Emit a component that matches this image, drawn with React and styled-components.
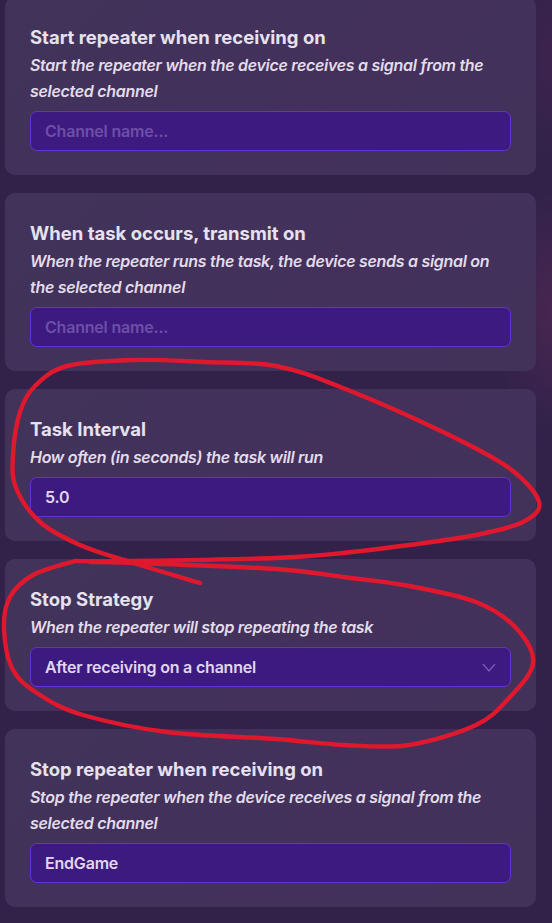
import React from 'react'
import styled, { createGlobalStyle } from 'styled-components'

const GlobalStyle = createGlobalStyle`
    html, body {
        margin: 0;
        padding: 0;
        background: #32224a;
    }
    body {
        font-family: Inter, "Noto Sans", "Liberation Sans", sans-serif;
        -webkit-font-smoothing: antialiased;
    }
`;

const fields = [
    {
        title: 'Start repeater when receiving on',
        desc: 'Start the repeater when the device receives a signal from the selected channel',
        placeholder: 'Channel name...',
    },
    {
        title: 'When task occurs, transmit on',
        desc: 'When the repeater runs the task, the device sends a signal on the selected channel',
        placeholder: 'Channel name...',
    },
    {
        title: 'Task Interval',
        desc: 'How often (in seconds) the task will run',
        value: '5.0',
    },
    {
        title: 'Stop Strategy',
        desc: 'When the repeater will stop repeating the task',
        value: 'After receiving on a channel',
        select: true,
    },
    {
        title: 'Stop repeater when receiving on',
        desc: 'Stop the repeater when the device receives a signal from the selected channel',
        value: 'EndGame',
    },
]

// hand drawn red marks over the screenshot
const loopOne = [
    [200, 583], [130, 562], [80, 545], [40, 522], [16, 488], [13, 455], [20, 412],
    [35, 386], [67, 366], [133, 360], [205, 362], [276, 366], [343, 388], [443, 432],
    [509, 468], [539, 502], [523, 522], [476, 535], [409, 545], [343, 553], [276, 558],
    [133, 561], [75, 561],
]
const loopTwo = [
    [75, 561], [33, 575], [10, 597], [4, 628], [13, 670], [40, 695], [83, 715],
    [167, 732], [276, 739], [343, 745], [409, 745], [476, 725], [509, 698], [533, 663],
    [516, 628], [476, 602], [409, 586], [343, 577], [276, 569], [133, 563], [90, 562],
]

function smooth(pts) {
    let d = `M ${pts[0][0]} ${pts[0][1]}`
    for (let i = 0; i < pts.length - 1; i++) {
        const p0 = pts[i - 1] || pts[i]
        const p1 = pts[i]
        const p2 = pts[i + 1]
        const p3 = pts[i + 2] || p2
        const c1x = p1[0] + (p2[0] - p0[0]) / 6
        const c1y = p1[1] + (p2[1] - p0[1]) / 6
        const c2x = p2[0] - (p3[0] - p1[0]) / 6
        const c2y = p2[1] - (p3[1] - p1[1]) / 6
        d += ` C ${c1x} ${c1y}, ${c2x} ${c2y}, ${p2[0]} ${p2[1]}`
    }
    return d
}

export default function App() {
    return (
        <Viewport>
            <GlobalStyle />
            <Column>
                {fields.map((f) => (
                    <Card key={f.title}>
                        <Title>{f.title}</Title>
                        <Desc>{f.desc}</Desc>
                        <Field>
                            <FieldText $muted={!f.value}>{f.value || f.placeholder}</FieldText>
                            {f.select && (
                                <svg width="14" height="9" viewBox="0 0 14 9">
                                    <polyline points="1,1 7,8 13,1" fill="none" stroke="#7b5bb6" strokeWidth="1.3" />
                                </svg>
                            )}
                        </Field>
                    </Card>
                ))}
            </Column>
            <Marks width="552" height="923" viewBox="0 0 552 923">
                <path d={smooth(loopOne)} fill="none" stroke="#e0182e" strokeWidth="4.4" strokeLinecap="round" />
                <path d={smooth(loopTwo)} fill="none" stroke="#e0182e" strokeWidth="4.4" strokeLinecap="round" />
            </Marks>
        </Viewport>
    )
}

const Viewport = styled.div`
    position: relative;
    width: 552px;
    height: 923px;
    overflow: hidden;
    background:
        radial-gradient(ellipse 70px 120px at 560px 310px, rgba(110, 45, 95, 0.4), transparent),
        radial-gradient(ellipse 60px 100px at 560px 60px, rgba(90, 40, 90, 0.3), transparent),
        #32224a;
`;

const Column = styled.div`
    display: flex;
    flex-direction: column;
    gap: 18px;
    width: 531px;
    margin-left: 5px;
    margin-top: -3px;
`;

const Card = styled.div`
    background: linear-gradient(135deg, #41335a 0%, #43315c 60%, #423259 100%);
    border-radius: 10px;
    padding: 28px 25px 24px 25px;
`;

const Title = styled.div`
    font-size: 18.5px;
    line-height: 24px;
    font-weight: 700;
    color: #e7e1ee;
`;

const Desc = styled.div`
    margin-top: 3px;
    font-size: 16px;
    line-height: 26px;
    font-style: italic;
    font-weight: 600;
    color: #e2dcea;
    letter-spacing: -0.3px;
`;

const Field = styled.div`
    margin-top: 7px;
    height: 40px;
    box-sizing: border-box;
    border: 1px solid #6431d6;
    border-radius: 7px;
    background: #3d1a80;
    display: flex;
    align-items: center;
    justify-content: space-between;
    padding: 0 14px 0 14px;
`;

const FieldText = styled.span`
    font-size: 16px;
    font-weight: 600;
    letter-spacing: -0.2px;
    color: ${(p) => (p.$muted ? '#6d4fa8' : '#e0d6f0')};
`;

const Marks = styled.svg`
    position: absolute;
    left: 0;
    top: 0;
    pointer-events: none;
`;
